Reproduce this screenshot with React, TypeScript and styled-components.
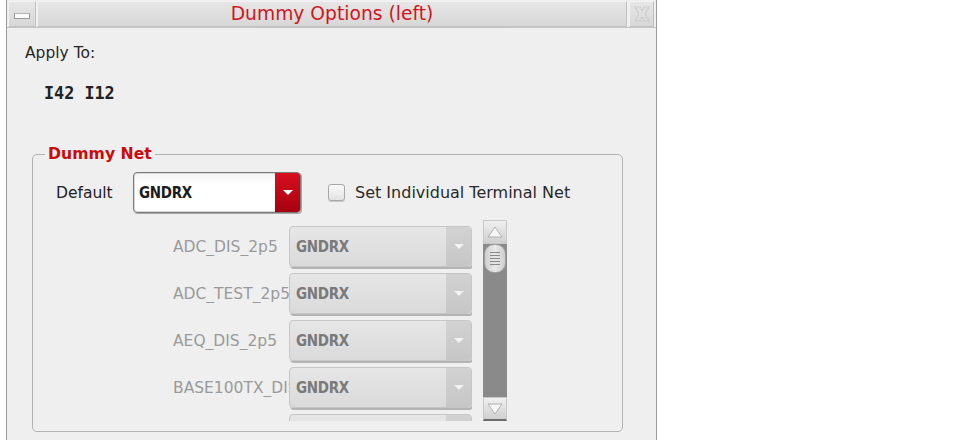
import React from "react";
import styled, { createGlobalStyle } from "styled-components";

const GlobalStyle = createGlobalStyle`
  html, body {
    margin: 0;
    padding: 0;
    background: #ffffff;
  }
  body {
    font-family: "DejaVu Sans", "Liberation Sans", sans-serif;
    font-size: 15.5px;
    color: #222;
  }
`;

const terminals = [
  "ADC_DIS_2p5",
  "ADC_TEST_2p5",
  "AEQ_DIS_2p5",
  "BASE100TX_DIS_2p5",
  "BASE100TX_EN_2p5",
];

export default function App() {
  return (
    <>
      <GlobalStyle />
      <Window>
        <TitleBar>
          <MinButton>
            <span />
          </MinButton>
          <Title>Dummy Options (left)</Title>
          <CloseButton>
            <svg width="18" height="18" viewBox="0 0 18 18">
              <path
                d="M2 2 L7 2 L9 6 L11 2 L16 2 L12 9 L16 16 L11 16 L9 12 L7 16 L2 16 L6 9 Z"
                fill="none"
                stroke="#c4c4c4"
                strokeWidth="1.2"
                strokeDasharray="1.5 1"
              />
            </svg>
          </CloseButton>
        </TitleBar>

        <Content>
          <ApplyLabel>Apply To:</ApplyLabel>
          <Targets>I42 I12</Targets>

          <Group>
            <Legend>Dummy Net</Legend>
            <GroupBody>
              <DefaultRow>
                <DefaultLabel>Default</DefaultLabel>
                <Combo>
                  <ComboText>GNDRX</ComboText>
                  <ComboArrow>
                    <Triangle />
                  </ComboArrow>
                </Combo>
                <CheckRow>
                  <CheckBox />
                  <span>Set Individual Terminal Net</span>
                </CheckRow>
              </DefaultRow>

              <ScrollArea>
                <RowList>
                  {terminals.map((t) => (
                    <TermRow key={t}>
                      <TermLabel>{t}</TermLabel>
                      <Combo disabled>
                        <ComboText disabled>GNDRX</ComboText>
                        <ComboArrow disabled>
                          <Triangle disabled />
                        </ComboArrow>
                      </Combo>
                    </TermRow>
                  ))}
                </RowList>
                <ScrollBar>
                  <ScrollButton>
                    <svg width="18" height="14" viewBox="0 0 18 14">
                      <path d="M9 2 L16 12 L2 12 Z" fill="#f6f6f6" stroke="#b0b0b0" />
                    </svg>
                  </ScrollButton>
                  <Thumb>
                    <Grip />
                    <Grip />
                    <Grip />
                    <Grip />
                    <Grip />
                  </Thumb>
                  <Track />
                  <ScrollButton down>
                    <svg width="18" height="14" viewBox="0 0 18 14">
                      <path d="M2 2 L16 2 L9 12 Z" fill="#f6f6f6" stroke="#b0b0b0" />
                    </svg>
                  </ScrollButton>
                </ScrollBar>
              </ScrollArea>
            </GroupBody>
          </Group>
        </Content>
      </Window>
    </>
  );
}

const Window = styled.div`
  margin-left: 6px;
  width: 651px;
  height: 440px;
  box-sizing: border-box;
  border-left: 1px solid #9c9c9c;
  border-right: 1px solid #9c9c9c;
  background: #efefef;
  overflow: hidden;
`;

const TitleBar = styled.div`
  display: flex;
  gap: 1px;
  height: 28px;
  padding: 1px 2px 0 1px;
  box-sizing: border-box;
  border-bottom: 1px solid #c4c4c4;
  background: #efefef;

  > * + * + * {
    margin-left: 1px;
  }
`;

const barButton = `
  box-sizing: border-box;
  height: 26px;
  background: linear-gradient(#e6e6e6, #d7d7d7);
  border: 1px solid #c2c2c2;
  border-top-color: #f2f2f2;
  border-left-color: #f2f2f2;
  display: flex;
  align-items: center;
  justify-content: center;
`;

const MinButton = styled.div`
  ${barButton}
  width: 28px;

  span {
    display: block;
    width: 14px;
    height: 4px;
    margin-top: 4px;
    background: #fafafa;
    border: 1px solid #9a9a9a;
    border-top-color: #b4b4b4;
  }
`;

const Title = styled.div`
  ${barButton}
  flex: 1;
  color: #d3141d;
  font-size: 18.7px;
  padding-bottom: 1px;
`;

const CloseButton = styled.div`
  ${barButton}
  width: 25px;
`;

const Content = styled.div`
  padding: 15px 0 0 0;
`;

const ApplyLabel = styled.div`
  padding-left: 18px;
  line-height: 20px;
  color: #262626;
`;

const Targets = styled.div`
  margin-top: 19px;
  padding-left: 37px;
  line-height: 22px;
  font-family: "DejaVu Sans Mono", "Liberation Mono", monospace;
  font-weight: bold;
  font-size: 16.8px;
  color: #222;
`;

const Group = styled.fieldset`
  margin: 40px 0 0 25px;
  width: 591px;
  box-sizing: border-box;
  padding: 0;
  border: 1px solid #b2b2b2;
  border-radius: 5px;
  min-inline-size: 0;
`;

const Legend = styled.legend`
  margin-left: 12px;
  padding: 0 3px;
  line-height: 20px;
  color: #cc0a0a;
  font-weight: bold;
  font-size: 15.7px;
`;

const GroupBody = styled.div`
  padding: 8px 0 10px 23px;
  display: flex;
  flex-direction: column;
  gap: 7px;
`;

const DefaultRow = styled.div`
  display: flex;
  align-items: center;
  height: 41px;
`;

const DefaultLabel = styled.div`
  width: 77px;
  color: #222;
`;

const Combo = styled.div<{ disabled?: boolean }>`
  box-sizing: border-box;
  display: flex;
  width: ${(p) => (p.disabled ? 183 : 168)}px;
  height: 41px;
  border-radius: 4px;
  overflow: hidden;
  border: 1px solid ${(p) => (p.disabled ? "#c6c6c6" : "#7a7a7a")};
  background: ${(p) =>
    p.disabled ? "linear-gradient(#e6e6e6, #dadada)" : "linear-gradient(#f4f4f4, #ffffff 30%)"};
  box-shadow: ${(p) =>
    p.disabled ? "1px 2px 0 #b4b4b4" : "inset 0 0 0 1px #d8d8d8, 1px 1px 0 #a8a8a8"};
  flex-shrink: 0;
`;

const ComboText = styled.div<{ disabled?: boolean }>`
  flex: 1;
  display: flex;
  align-items: center;
  padding-left: ${(p) => (p.disabled ? 6 : 5)}px;
  font-family: "DejaVu Sans Condensed", "DejaVu Sans", sans-serif;
  font-weight: bold;
  font-size: 15px;
  letter-spacing: -0.3px;
  color: ${(p) => (p.disabled ? "#7a7a7a" : "#1c1c1c")};
`;

const ComboArrow = styled.div<{ disabled?: boolean }>`
  width: 25px;
  display: flex;
  align-items: center;
  justify-content: center;
  background: ${(p) =>
    p.disabled ? "linear-gradient(#d2d2d2, #c6c6c6)" : "linear-gradient(#d8101e, #a5000f)"};
`;

const Triangle = styled.span<{ disabled?: boolean }>`
  width: 0;
  height: 0;
  border-left: 5px solid transparent;
  border-right: 5px solid transparent;
  border-top: 5px solid ${(p) => (p.disabled ? "#f2f2f2" : "#ffffff")};
`;

const CheckRow = styled.label`
  display: flex;
  align-items: center;
  gap: 10px;
  margin-left: 27px;
  font-size: 16px;
  color: #2a2a2a;
`;

const CheckBox = styled.span`
  display: block;
  width: 17px;
  height: 17px;
  box-sizing: border-box;
  border: 1px solid #a8a8a8;
  border-radius: 3px;
  background: linear-gradient(#fafafa, #e2e2e2);
  box-shadow: 0 1px 0 #c8c8c8;
`;

const ScrollArea = styled.div`
  margin-left: 117px;
  display: flex;
  gap: 11px;
  height: 201px;
`;

const RowList = styled.div`
  width: 299px;
  padding-top: 6px;
  display: flex;
  flex-direction: column;
  gap: 6px;
  overflow: hidden;
`;

const TermRow = styled.div`
  display: flex;
  align-items: center;
  flex-shrink: 0;
  height: 41px;
`;

const TermLabel = styled.div`
  width: 116px;
  overflow: hidden;
  white-space: nowrap;
  color: #9a9a9a;
`;

const ScrollBar = styled.div`
  width: 24px;
  display: flex;
  flex-direction: column;
  background: #8a8a8a;
`;

const ScrollButton = styled.div<{ down?: boolean }>`
  height: 24px;
  box-sizing: border-box;
  display: flex;
  align-items: center;
  justify-content: center;
  background: linear-gradient(#f0f0f0, #cfcfcf);
  border: 1px solid #c8c8c8;
  border-bottom: ${(p) => (p.down ? "2px solid #6c6c6c" : "1px solid #c8c8c8")};
`;

const Thumb = styled.div`
  height: 29px;
  margin: 0 1px;
  box-sizing: border-box;
  border: 1px solid #a0a0a0;
  border-radius: 10px;
  background: linear-gradient(90deg, #cfcfcf, #e8e8e8 50%, #cfcfcf);
  display: flex;
  flex-direction: column;
  align-items: center;
  justify-content: center;
  gap: 2px;
`;

const Grip = styled.span`
  display: block;
  width: 10px;
  height: 1px;
  background: #8a8a8a;
`;

const Track = styled.div`
  flex: 1;
`;
